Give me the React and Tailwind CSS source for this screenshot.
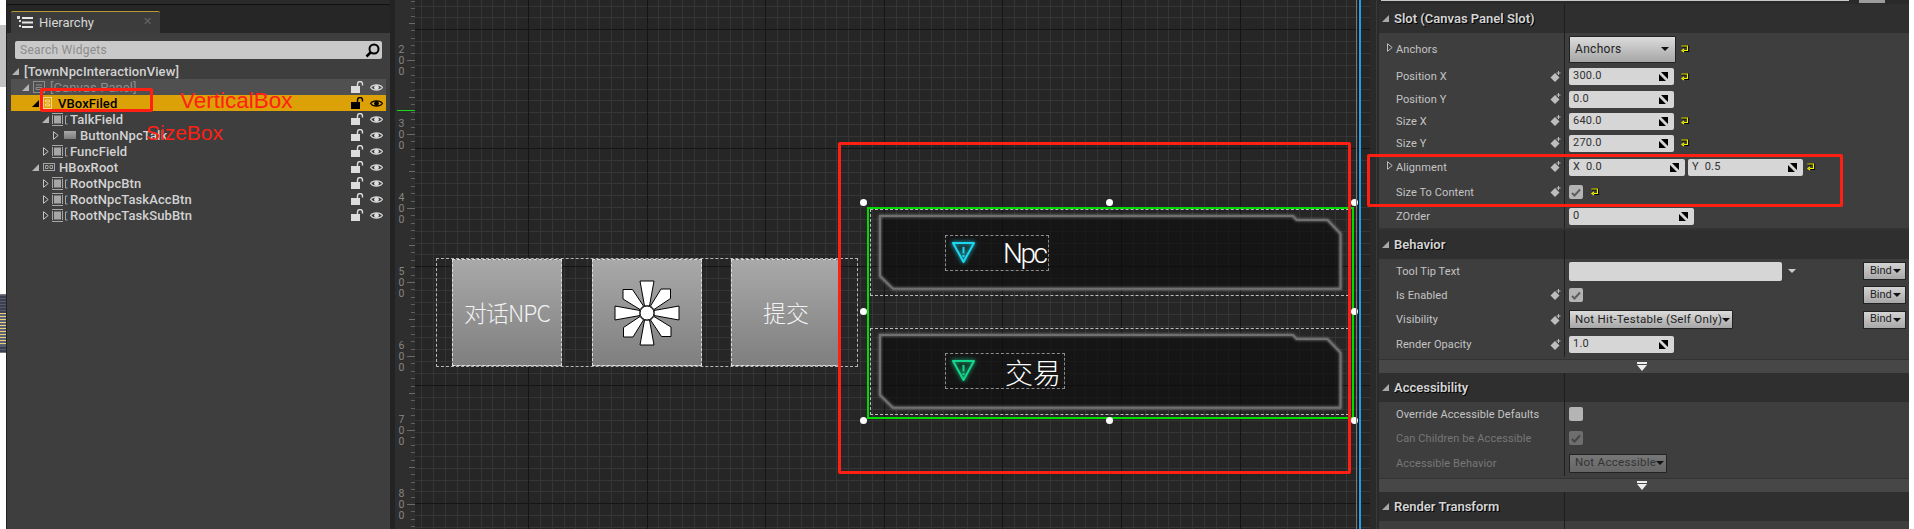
const FONT = "font-['Roboto','Noto_Sans',sans-serif]";

// Hierarchy tree rows
const TREE = [
  { name: '[TownNpcInteractionView]', arrow: 'open', arrowX: 'ml-[1px]', textGap: 'ml-[5px]', icon: null, cls: 'text-[#d2d2d2]' },
  { name: '[Canvas Panel]', arrow: 'open', arrowX: 'ml-[11px]', textGap: 'ml-[4px]', icon: 'canvas', cls: 'text-[#8e8e8e] font-normal', row: 'bg-[#505050]' },
  { name: 'VBoxFiled', arrow: 'black', arrowX: 'ml-[21px]', textGap: 'ml-[5px]', icon: 'vbox', cls: 'text-black', row: 'bg-[#dca106]' },
  { name: 'TalkField', arrow: 'open', arrowX: 'ml-[31px]', textGap: 'ml-[2px]', icon: 'size', cls: 'text-[#d2d2d2]' },
  { name: 'ButtonNpcTalk', arrow: 'closed', arrowX: 'ml-[42px]', textGap: 'ml-[4px]', icon: 'button', cls: 'text-[#d2d2d2]' },
  { name: 'FuncField', arrow: 'closed', arrowX: 'ml-[32px]', textGap: 'ml-[2px]', icon: 'size', cls: 'text-[#d2d2d2]' },
  { name: 'HBoxRoot', arrow: 'open', arrowX: 'ml-[21px]', textGap: 'ml-[4px]', icon: 'hbox', cls: 'text-[#d2d2d2]' },
  { name: 'RootNpcBtn', arrow: 'closed', arrowX: 'ml-[32px]', textGap: 'ml-[2px]', icon: 'size', cls: 'text-[#d2d2d2]' },
  { name: 'RootNpcTaskAccBtn', arrow: 'closed', arrowX: 'ml-[32px]', textGap: 'ml-[2px]', icon: 'size', cls: 'text-[#d2d2d2]' },
  { name: 'RootNpcTaskSubBtn', arrow: 'closed', arrowX: 'ml-[32px]', textGap: 'ml-[2px]', icon: 'size', cls: 'text-[#d2d2d2]' },
];

const HANDLES = [
  'left-[445px] top-[199px]', 'left-[691px] top-[199px]', 'left-[936px] top-[199px]',
  'left-[445px] top-[308px]', 'left-[936px] top-[308px]',
  'left-[445px] top-[417px]', 'left-[691px] top-[417px]', 'left-[936px] top-[417px]',
];

function Arrow({ type }) {
  if (type === 'closed') {
    return (
      <svg width="6" height="9" viewBox="0 0 6 9" className="shrink-0">
        <path d="M.5.7 5.2 4.5.5 8.3Z" fill="none" stroke="#c4c4c4" strokeWidth="1" />
      </svg>
    );
  }
  return (
    <svg width="7" height="7" viewBox="0 0 7 7" className="shrink-0">
      <path d="M7 0V7H0Z" fill={type === 'black' ? '#000' : '#b4b4b4'} />
    </svg>
  );
}

function WidgetIcon({ type }) {
  if (type === 'canvas') {
    return (
      <svg width="13" height="13" viewBox="0 0 13 13" className="ml-[4px] shrink-0" fill="none" stroke="#8c8c8c">
        <rect x=".5" y=".5" width="11" height="11" />
        <path d="M3 4h6M3 6.5h6v2H3z" />
      </svg>
    );
  }
  if (type === 'vbox') {
    return (
      <svg width="10" height="13" viewBox="0 0 10 13" className="ml-[4px] shrink-0" fill="none" stroke="#f8d98a">
        <rect x=".5" y=".5" width="8" height="11" />
        <path d="M2.5 3h4v2h-4zM2.5 7h4v2h-4z" />
      </svg>
    );
  }
  if (type === 'size') {
    return (
      <svg width="16" height="13" viewBox="0 0 16 13" className="ml-[3px] shrink-0" fill="none" stroke="#a6a6a6">
        <path d="M0 .5h11M0 12.5h11M.5 2v9M10.5 2v9M15.5 3h-2v8h2" />
        <rect x="2.5" y="3" width="6" height="7" fill="#a6a6a6" />
      </svg>
    );
  }
  if (type === 'hbox') {
    return (
      <svg width="12" height="9" viewBox="0 0 12 9" className="ml-[4px] shrink-0" fill="none" stroke="#a6a6a6">
        <rect x=".5" y=".5" width="11" height="7" />
        <path d="M2.5 2.5h2.5v3H2.5zM7 2.5h2.5v3H7z" />
      </svg>
    );
  }
  if (type === 'button') {
    return <div className="ml-[5px] h-[8px] w-[12px] shrink-0 bg-gradient-to-b from-[#a8a8a8] to-[#7c7c7c]" />;
  }
  return null;
}

function LockEye({ dark }) {
  const c = dark ? '#000' : '#dcdcdc';
  return (
    <div className="ml-auto mr-[3px] flex items-center gap-[6px]">
      <svg width="13" height="12" viewBox="0 0 13 12">
        <rect x="0" y="5" width="9" height="7" fill={c} />
        <path d="M6.5 5V3a2.5 2.5 0 0 1 5 0v1.5" fill="none" stroke={c} strokeWidth="1.4" />
      </svg>
      <svg width="13" height="9" viewBox="0 0 13 9">
        <path d="M.5 4.5C3 1 10 1 12.5 4.5 10 8 3 8 .5 4.5Z" fill="none" stroke={c} strokeWidth="1.1" />
        <circle cx="6.5" cy="4.5" r="2.4" fill={c} />
      </svg>
    </div>
  );
}

function Hierarchy() {
  return (
    <div className={`flex w-[384px] shrink-0 flex-col border-l border-[#222] bg-[#3e3e3e] ${FONT}`}>
      {/* tab strip */}
      <div className="h-[5px] border-b border-[#111] bg-[#2a2a2a]" />
      <div className="flex h-[28px] items-end bg-[#262626] pl-[4px]">
        <div className="flex h-[22px] w-[149px] items-center rounded-t-[2px] border-t border-[#b89a35] bg-[#3c3c3c] pl-[6px]">
          <svg width="16" height="13" viewBox="0 0 16 13">
            <path d="M0 0h3v3H0zM2 4h2v2H2zM2 9h2v2H2z" fill="#ddd" />
            <path d="M5 1h11v2H5zM5 5.5h11v2H5zM5 10h11v2H5z" fill="#e8e8e8" />
          </svg>
          <span className="ml-[6px] text-[13px] text-[#d8d8d8]">Hierarchy</span>
          <span className="ml-auto mr-[8px] text-[11px] text-[#666]">✕</span>
        </div>
      </div>
      {/* search */}
      <div className="mx-[8px] mt-[8px] flex h-[18px] items-center rounded-[2px] bg-[#c9c9c9] pl-[5px] pr-[2px]">
        <span className="text-[12px] tracking-[0.25px] text-[#8c8c8c]">Search Widgets</span>
        <svg width="15" height="15" viewBox="0 0 15 15" className="ml-auto">
          <circle cx="9" cy="6" r="4.5" fill="none" stroke="#000" strokeWidth="2" />
          <path d="M5.5 9.5 1.5 13.5" stroke="#000" strokeWidth="2.5" />
        </svg>
      </div>
      {/* tree */}
      <div className="mx-[4px] mt-[4px] flex flex-col">
        {TREE.map((t) => (
          <div key={t.name} className={`flex h-[16px] items-center ${t.row || ''}`}>
            <div className={`flex items-center ${t.arrowX}`}>
              <Arrow type={t.arrow} />
              <WidgetIcon type={t.icon} />
              <span className={`${t.textGap} whitespace-nowrap pt-[1px] text-[13px] font-medium leading-[15px] tracking-[0.1px] ${t.cls}`}>{t.name}</span>
            </div>
            {t.name !== '[TownNpcInteractionView]' && <LockEye dark={t.name === 'VBoxFiled'} />}
          </div>
        ))}
      </div>
    </div>
  );
}

function Ruler() {
  return (
    <div className={`relative h-full w-[20px] shrink-0 overflow-hidden bg-[#2e2e2e] pt-[23px] ${FONT}`}>
      <div className="absolute inset-y-0 right-0 w-[4px] bg-[repeating-linear-gradient(to_bottom,transparent_0_0.8px,#5e5e5e_0.8px_1.8px,transparent_1.8px_7.4px)]" />
      <div className="absolute inset-y-0 right-0 w-[6px] bg-[repeating-linear-gradient(to_bottom,transparent_0_23px,#6a6a6a_23px_24px,transparent_24px_74px)]" />
      <div className="absolute inset-y-0 right-0 w-[8px] bg-[repeating-linear-gradient(to_bottom,transparent_0_60px,#6a6a6a_60px_61px,transparent_61px_74px)]" />
      <div className="absolute right-0 top-[110px] h-px w-[18px] bg-[#18d818]" />
      {['200', '300', '400', '500', '600', '700', '800'].map((v) => (
        <div key={v} className="flex h-[74px] w-[10px] flex-col items-center justify-center pl-[3px] text-[10.5px] leading-[11px] text-[#858585]">
          {v.split('').map((d, i) => (
            <span key={i}>{d}</span>
          ))}
        </div>
      ))}
    </div>
  );
}

function Sunburst() {
  const spokes = [0, 90, 180, 270];
  return (
    <svg width="66" height="66" viewBox="-33 -33 66 66">
      {spokes.map((r) => (
        <g key={r} transform={`rotate(${r})`} fill="#fff" stroke="#000" strokeWidth="1">
          <path d="M-7-32H7L2.5-7h-5Z" />
          <path d="M-24-23.5h9.500L-3.500-7-7-3.500-24-14Z" />
        </g>
      ))}
      <circle r="7" fill="#fff" stroke="#000" strokeWidth="1" />
    </svg>
  );
}

function GrayButton({ children, className }) {
  return (
    <div className={`flex h-full w-[110px] items-center justify-center border border-dashed border-[#ddd] bg-gradient-to-b from-[#a9a9a9] to-[#7f7f7f] ${className}`}>
      {children}
    </div>
  );
}

function WarnIcon({ color }) {
  return (
    <svg width="25" height="23" viewBox="0 0 25 23" className="shrink-0" style={{ filter: `drop-shadow(0 0 2px ${color})` }}>
      <path d="M2 2h21L12.5 21Z" fill="none" stroke={color} strokeWidth="2" strokeLinejoin="round" />
      <path d="M11.5 6h2v6.500h-2zM11.5 14h2v2h-2z" fill={color} />
    </svg>
  );
}

function FrameButton({ color, label, boxCls, labelCls, pos }) {
  const outline = 'M9 6H422L425.5 10H456.5L469.5 23.7V78.7H22L9 66Z';
  return (
    <div className={`absolute left-[455px] h-[87px] w-[479px] border border-dashed border-[#bdbdbd] ${pos}`}>
      <svg className="absolute left-0 top-0" width="479" height="87" viewBox="0 0 479 87">
        <path d={outline} fill="#0e0e0e" fillOpacity="0.68" />
        <path d={outline} fill="none" stroke="#707070" strokeWidth="2" style={{ filter: 'drop-shadow(0 0 1.5px #8a8a8a)' }} />
      </svg>
      <div className={`relative ml-[74px] flex h-[36px] items-start border border-dashed border-[#8c8c8c] pl-[5px] pt-[5px] ${boxCls}`}>
        <WarnIcon color={color} />
        <span className={`whitespace-nowrap text-white ${labelCls}`}>{label}</span>
      </div>
    </div>
  );
}

function Canvas() {
  return (
    <div className="relative h-full flex-1 overflow-hidden bg-[#262626]">
      {/* grid */}
      <div className="absolute inset-0 bg-[repeating-linear-gradient(to_right,transparent_0_6.3px,#353535_6.3px_7.3px,transparent_7.3px_11.86px),repeating-linear-gradient(to_bottom,transparent_0_5.6px,#353535_5.6px_6.6px,transparent_6.6px_11.85px)]" />
      <div className="absolute inset-0 bg-[repeating-linear-gradient(to_right,transparent_0_113px,#151515_113px_114px,transparent_114px_118.6px),repeating-linear-gradient(to_bottom,transparent_0_29px,#151515_29px_30px,transparent_30px_118.5px)]" />

      {/* HBoxRoot */}
      <div className="absolute left-[21px] top-[258px] flex h-[109px] w-[422px] border border-dashed border-[#b5b5b5] pl-[15px]">
        <GrayButton className="text-[23px]">
          <span className="whitespace-nowrap font-['Noto_Sans_CJK_SC',sans-serif] font-light tracking-[-1px] text-[#f2f2f2]">对话NPC</span>
        </GrayButton>
        <GrayButton className="ml-[30px]">
          <Sunburst />
        </GrayButton>
        <GrayButton className="ml-[29px] text-[23px]">
          <span className="font-['Noto_Sans_CJK_SC',sans-serif] font-light text-[#f2f2f2]">提交</span>
        </GrayButton>
      </div>

      {/* VBoxFiled */}
      <FrameButton
        pos="top-[209px]"
        color="#1ed6ee"
        label="Npc"
        boxCls="mt-[25px] w-[104px]"
        labelCls="ml-[27px] -mt-[2px] font-['Roboto',sans-serif] text-[28px] leading-[30px] font-light tracking-[-2.4px]"
      />
      <FrameButton
        pos="top-[328px]"
        color="#14d68c"
        label="交易"
        boxCls="mt-[24px] w-[120px]"
        labelCls="ml-[29px] -mt-[1px] font-['Noto_Sans_CJK_SC',sans-serif] text-[28px] leading-[28px] font-light"
      />

      <div className="absolute left-[452px] top-[207px] h-[212px] w-[487px] border-2 border-[#00dc00]" />
      {HANDLES.map((h) => (
        <div key={h} className={`absolute h-[7px] w-[7px] rounded-full bg-white ${h}`} />
      ))}

      {/* guide lines */}
      <div className="absolute inset-y-0 left-[941px] w-px bg-[#777]" />
      <div className="absolute inset-y-0 left-[944px] w-[2px] bg-[#1aa3e8]" />

      {/* annotation */}
      <div className="absolute left-[423px] top-[142px] h-[332px] w-[513px] rounded-[2px] border-[3px] border-[#ff2013]" />
    </div>
  );
}

function ResetArrow({ className = '' }) {
  return (
    <svg width="9" height="8" viewBox="0 0 9 8" className={`shrink-0 ${className}`}>
      <path d="M1 1.5h6v4.500H2.500" fill="none" stroke="#000" strokeWidth="2.2" />
      <path d="M.5 1h6v4.500H2.500M3 4 1 5.500 3 7" fill="none" stroke="#f4f400" strokeWidth="1.2" />
    </svg>
  );
}

function KeyIcon() {
  return (
    <svg width="11" height="12" viewBox="0 0 11 12" className="ml-auto mr-[2px] shrink-0">
      <path d="M5 2 9.500 6.500 5 11 .5 6.500Z" fill="#bdbdbd" />
      <path d="M8.500 0v4M6.500 2h4" stroke="#bdbdbd" />
    </svg>
  );
}

function Spin() {
  return (
    <svg width="9" height="9" viewBox="0 0 9 9" className="ml-auto shrink-0">
      <path d="M2 0H9V7ZM0 2 7 9H0Z" fill="#000" />
    </svg>
  );
}

function NumBox({ w, children }) {
  return (
    <div className={`flex h-[17px] items-center rounded-[2px] bg-[#d6d6d6] pl-[4px] pr-[6px] text-[11px] tracking-[0.2px] text-[#303030] ${w}`}>
      <span>{children}</span>
      <Spin />
    </div>
  );
}

function Check({ on, dim }) {
  return (
    <div className={`flex h-[14px] w-[14px] items-center justify-center rounded-[2px] ${dim ? 'bg-[#6e6e6e]' : 'bg-[#b4b4b4]'}`}>
      {on && (
        <svg width="10" height="9" viewBox="0 0 10 9">
          <path d="M1 5 3.500 7.500 9 1.500" fill="none" stroke={dim ? '#454545' : '#5e5e5e'} strokeWidth="2" />
        </svg>
      )}
    </div>
  );
}

function Combo({ w, dim, h = 'h-[19px]', text }) {
  return (
    <div className={`flex items-center justify-between rounded-[1px] border border-[#222] pl-[5px] pr-[6px] text-[11.5px] tracking-[0.3px] ${h} ${w} ${dim ? 'bg-gradient-to-b from-[#777] to-[#666] text-[#333]' : 'bg-gradient-to-b from-[#dcdcdc] to-[#a6a6a6] text-[#222]'}`}>
      <span className="whitespace-nowrap">{text}</span>
      <span className="h-0 w-0 border-x-[4px] border-t-[4px] border-x-transparent border-t-[#111]" />
    </div>
  );
}

function BindBtn() {
  return (
    <div className="ml-auto flex h-[18px] w-[43px] items-center justify-between border border-[#222] bg-gradient-to-b from-[#d4d4d4] to-[#a8a8a8] pl-[6px] pr-[4px] text-[11px] text-[#222]">
      <span>Bind</span>
      <span className="h-0 w-0 border-x-[4px] border-t-[4px] border-x-transparent border-t-[#111]" />
    </div>
  );
}

function SectionHeader({ title }) {
  return (
    <div className="flex h-[29px] shrink-0 bg-[#2f2f2f]">
      <div className="flex w-[185px] items-center pl-[3px]">
        <svg width="7" height="7" viewBox="0 0 7 7" className="mr-[5px]">
          <path d="M7 0V7H0Z" fill="#a8a8a8" />
        </svg>
        <span className="text-[13px] font-semibold text-[#d4d4d4] [text-shadow:1px_1px_0_#000]">{title}</span>
      </div>
      <div className="border-l border-[#1e1e1e]" />
    </div>
  );
}

function Row({ h, label, arrow, keyed = true, dim, children }) {
  return (
    <div className={`flex shrink-0 ${h}`}>
      <div className="flex w-[185px] items-center pl-[17px] pr-[1px]">
        <span className={`relative whitespace-nowrap pt-[2px] text-[11px] tracking-[0.1px] ${dim ? 'text-[#777]' : 'text-[#c4c4c4]'}`}>
          {arrow && (
            <svg width="6" height="9" viewBox="0 0 6 9" className="absolute -left-[9px] top-[3px]">
              <path d="M.5.7 5.2 4.5.5 8.3Z" fill="none" stroke="#bbb" />
            </svg>
          )}
          {label}
        </span>
        {keyed && <KeyIcon />}
      </div>
      <div className="flex flex-1 items-center border-l border-[#1e1e1e] pl-[4px] pr-[3px]">{children}</div>
    </div>
  );
}

function Expander() {
  return (
    <div className="mt-[2px] flex h-[14px] shrink-0 flex-col items-center justify-center border-t border-[#333] bg-[#474747]">
      <div className="-ml-[4px] flex flex-col items-center gap-[1px]">
        <div className="h-[1.5px] w-[10px] bg-[#eee]" />
        <div className="h-0 w-0 border-x-[5px] border-t-[6px] border-x-transparent border-t-[#eee]" />
      </div>
    </div>
  );
}

function Details() {
  return (
    <div className={`flex w-[530px] shrink-0 flex-col bg-[#3e3e3e] ${FONT}`}>
      <div className="flex h-[4px] shrink-0 bg-[#2a2a2a]">
        <div className="ml-[2px] h-[1px] w-[468px] bg-[#c8c8c8]" />
        <div className="ml-[10px] h-[3px] w-[26px] bg-[#9c9c9c]" />
      </div>
      <SectionHeader title="Slot (Canvas Panel Slot)" />
      <Row h="h-[32px]" label="Anchors" arrow keyed={false}>
        <Combo w="w-[107px]" h="h-[27px]" text={<span className="text-[12px]">Anchors</span>} />
        <ResetArrow className="ml-[5px]" />
      </Row>
      <Row h="h-[23px]" label="Position X">
        <NumBox w="w-[105px]">300.0</NumBox>
        <ResetArrow className="ml-[7px]" />
      </Row>
      <Row h="h-[22px]" label="Position Y">
        <NumBox w="w-[105px]">0.0</NumBox>
      </Row>
      <Row h="h-[22px]" label="Size X">
        <NumBox w="w-[105px]">640.0</NumBox>
        <ResetArrow className="ml-[7px]" />
      </Row>
      <Row h="h-[22px]" label="Size Y">
        <NumBox w="w-[105px]">270.0</NumBox>
        <ResetArrow className="ml-[7px]" />
      </Row>
      <Row h="h-[26px]" label="Alignment" arrow>
        <NumBox w="w-[116px]">X&nbsp;&nbsp;0.0</NumBox>
        <div className="w-[3px]" />
        <NumBox w="w-[115px]">Y&nbsp;&nbsp;0.5</NumBox>
        <ResetArrow className="ml-[4px]" />
      </Row>
      <Row h="h-[24px]" label="Size To Content">
        <Check on />
        <ResetArrow className="ml-[8px]" />
      </Row>
      <Row h="h-[24px]" label="ZOrder" keyed={false}>
        <NumBox w="w-[125px]">0</NumBox>
      </Row>

      <div className="h-[2px] shrink-0 bg-[#333]" />
      <SectionHeader title="Behavior" />
      <Row h="h-[24px]" label="Tool Tip Text" keyed={false}>
        <div className="h-[19px] w-[213px] rounded-[2px] bg-[#d6d6d6]" />
        <span className="ml-[6px] h-0 w-0 border-x-[4px] border-t-[4px] border-x-transparent border-t-[#ccc]" />
        <BindBtn />
      </Row>
      <Row h="h-[24px]" label="Is Enabled">
        <Check on />
        <BindBtn />
      </Row>
      <Row h="h-[25px]" label="Visibility">
        <Combo w="w-[164px]" text="Not Hit-Testable (Self Only)" />
        <BindBtn />
      </Row>
      <Row h="h-[25px]" label="Render Opacity">
        <NumBox w="w-[105px]">1.0</NumBox>
      </Row>
      <Expander />
      <SectionHeader title="Accessibility" />
      <Row h="h-[24px]" label="Override Accessible Defaults" keyed={false}>
        <Check />
      </Row>
      <Row h="h-[24px]" label="Can Children be Accessible" keyed={false} dim>
        <Check on dim />
      </Row>
      <Row h="h-[26px]" label="Accessible Behavior" keyed={false} dim>
        <Combo w="w-[98px]" dim text="Not Accessible" />
      </Row>
      <Expander />
      <SectionHeader title="Render Transform" />
      <Row h="h-[8px]" label="" keyed={false} />
    </div>
  );
}

export default function App() {
  return (
    <div className="relative flex h-[529px] w-[1914px] overflow-hidden bg-white">
      {/* sliver of the window behind */}
      <div className="flex w-[6px] shrink-0 flex-col">
        <div className="mt-[25px] h-[62px] bg-[#c2c2c2]" />
        <div className="mt-[207px] h-[59px] border-y border-[#777] bg-[repeating-linear-gradient(to_bottom,#565b6b_0_1px,#3c4050_1px_3px)]">
          <div className="mt-[18px] h-[33px] bg-[repeating-linear-gradient(to_bottom,#e6d27a_0_1px,#5c6074_1px_3px)]" />
        </div>
      </div>

      <Hierarchy />
      <div className="w-[5px] shrink-0 bg-[#232323]" />
      <Ruler />
      <Canvas />
      <div className="flex w-[9px] shrink-0 bg-[#2a2a2a]">
        <div className="ml-[6px] w-px bg-[#3a3a3a]" />
      </div>
      <Details />
      <div className="w-[5px] shrink-0 bg-white" />

      {/* red annotations over the screenshot */}
      <div className="absolute left-[40px] top-[88px] h-[24px] w-[113px] rounded-[2px] border-[3px] border-[#ff2013]" />
      <span className="absolute left-[180px] top-[90px] font-['Liberation_Sans',sans-serif] text-[22.5px] leading-[22px] text-[#ff2013]">VerticalBox</span>
      <span className="absolute left-[146px] top-[122px] font-['Liberation_Sans',sans-serif] text-[21px] leading-[22px] text-[#ff2013]">SizeBox</span>
      <div className="absolute left-[1367px] top-[154px] h-[53px] w-[476px] rounded-[2px] border-[3px] border-[#ff2013]" />
    </div>
  );
}
